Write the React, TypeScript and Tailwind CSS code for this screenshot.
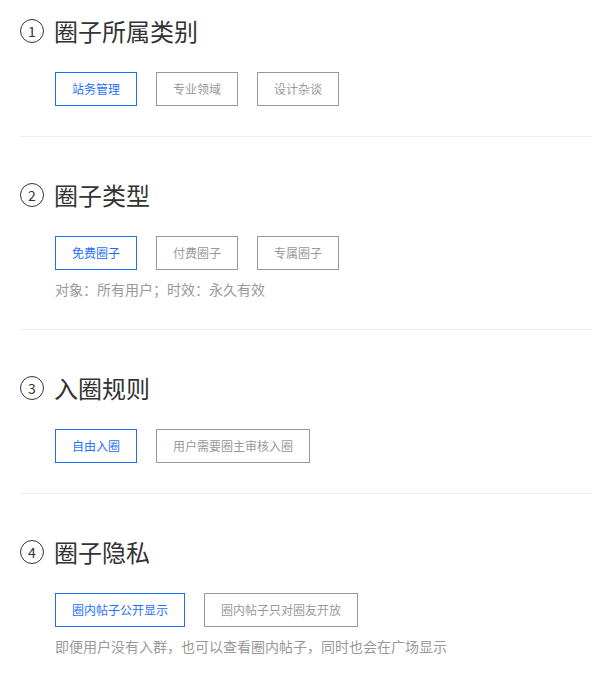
import React from 'react';

type Section = {
  num: number;
  title: string;
  options: string[];
  desc?: string;
};

const sections: Section[] = [
  { num: 1, title: '圈子所属类别', options: ['站务管理', '专业领域', '设计杂谈'] },
  { num: 2, title: '圈子类型', options: ['免费圈子', '付费圈子', '专属圈子'], desc: '对象：所有用户；时效：永久有效' },
  { num: 3, title: '入圈规则', options: ['自由入圈', '用户需要圈主审核入圈'] },
  {
    num: 4,
    title: '圈子隐私',
    options: ['圈内帖子公开显示', '圈内帖子只对圈友开放'],
    desc: '即便用户没有入群，也可以查看圈内帖子，同时也会在广场显示',
  },
];

const App = () => {
  return (
    <div
      className="w-[592px] bg-white pl-5"
      style={{ fontFamily: '"Noto Sans CJK SC", "Noto Sans", sans-serif' }}
    >
      {sections.map((s, i) => (
        <div
          key={s.num}
          className={`${i === 0 ? 'pt-[19px]' : 'pt-[46px]'} ${
            i < sections.length - 1 ? 'border-b border-[#eeeeee]' : ''
          } pb-[30px]`}
        >
          {/* Title */}
          <div className="flex items-center h-6">
            <span className="w-6 h-6 rounded-full border border-[#333] flex items-center justify-center text-[14px] leading-none text-[#333]">
              {s.num}
            </span>
            <h2 className="ml-[10px] text-[24px] leading-6 text-[#333] font-normal">{s.title}</h2>
          </div>

          {/* Options */}
          <div className="flex gap-[19px] mt-[29px] pl-[35px]">
            {s.options.map((o, j) => (
              <button
                key={o}
                className={`h-[34px] px-4 min-w-[82px] border text-[12px] leading-none ${
                  j === 0 ? 'border-[#1f6fff] text-[#1f6fff]' : 'border-[#999] text-[#999]'
                }`}
              >
                {o}
              </button>
            ))}
          </div>

          {s.desc && (
            <p className="pl-[35px] mt-[9px] text-[14px] leading-5 text-[#999]">{s.desc}</p>
          )}
        </div>
      ))}
    </div>
  );
};

export default App;
